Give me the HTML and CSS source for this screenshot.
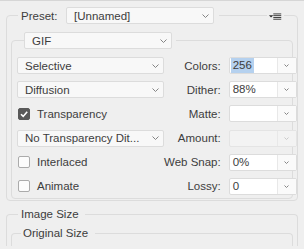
FILE: index.html
```html
<!DOCTYPE html>
<html lang="en">
<head>
    <meta charset="UTF-8">
    <meta name="viewport" content="width=device-width, initial-scale=1.0">
    <title>Save for Web - GIF</title>
    <link rel="stylesheet" href="styles.css">
</head>
<body>
    <fieldset class="group outer">
        <legend class="preset">
            <div class="legend-row">
                <span class="preset-label">Preset:</span>
                <div class="select">
                    <span>[Unnamed]</span>
                    <svg class="chev" width="7" height="4" viewBox="0 0 7 4"><polyline points="0.5,0.5 3.5,3.5 6.5,0.5"/></svg>
                </div>
            </div>
        </legend>
        <svg class="menu-icon" width="17" height="8" viewBox="0 0 17 8">
            <polygon points="1,2 6,2 3.5,4.5"/>
            <rect x="6" y="0" width="9" height="1"/>
            <rect x="6" y="2" width="9" height="1"/>
            <rect x="6" y="4" width="9" height="1"/>
            <rect x="6" y="6" width="9" height="1"/>
        </svg>

        <fieldset class="group inner">
            <legend class="format">
                <div class="select">
                    <span>GIF</span>
                    <svg class="chev" width="7" height="4" viewBox="0 0 7 4"><polyline points="0.5,0.5 3.5,3.5 6.5,0.5"/></svg>
                </div>
            </legend>

            <div class="grid">
                <div class="select">
                    <span>Selective</span>
                    <svg class="chev" width="7" height="4" viewBox="0 0 7 4"><polyline points="0.5,0.5 3.5,3.5 6.5,0.5"/></svg>
                </div>
                <span class="lbl">Colors:</span>
                <div class="combo">
                    <span class="val"><span class="hl">256</span></span>
                    <span class="arrow"><svg class="chev small" width="5" height="3" viewBox="0 0 5 3"><polyline points="0.5,0.5 2.5,2.5 4.5,0.5"/></svg></span>
                </div>

                <div class="select">
                    <span>Diffusion</span>
                    <svg class="chev" width="7" height="4" viewBox="0 0 7 4"><polyline points="0.5,0.5 3.5,3.5 6.5,0.5"/></svg>
                </div>
                <span class="lbl">Dither:</span>
                <div class="combo">
                    <span class="val">88%</span>
                    <span class="arrow"><svg class="chev small" width="5" height="3" viewBox="0 0 5 3"><polyline points="0.5,0.5 2.5,2.5 4.5,0.5"/></svg></span>
                </div>

                <div class="check">
                    <span class="box on"><svg width="10" height="10" viewBox="0 0 10 10"><polyline points="2,5.2 4.2,7.4 8.2,2.8"/></svg></span>
                    <span>Transparency</span>
                </div>
                <span class="lbl">Matte:</span>
                <div class="combo">
                    <span class="val"></span>
                    <span class="arrow"><svg class="chev small" width="5" height="3" viewBox="0 0 5 3"><polyline points="0.5,0.5 2.5,2.5 4.5,0.5"/></svg></span>
                </div>

                <div class="select">
                    <span>No Transparency Dit...</span>
                    <svg class="chev" width="7" height="4" viewBox="0 0 7 4"><polyline points="0.5,0.5 3.5,3.5 6.5,0.5"/></svg>
                </div>
                <span class="lbl">Amount:</span>
                <div class="combo disabled">
                    <span class="val"></span>
                    <span class="arrow"><svg class="chev small" width="5" height="3" viewBox="0 0 5 3"><polyline points="0.5,0.5 2.5,2.5 4.5,0.5"/></svg></span>
                </div>

                <div class="check">
                    <span class="box"></span>
                    <span>Interlaced</span>
                </div>
                <span class="lbl">Web Snap:</span>
                <div class="combo">
                    <span class="val">0%</span>
                    <span class="arrow"><svg class="chev small" width="5" height="3" viewBox="0 0 5 3"><polyline points="0.5,0.5 2.5,2.5 4.5,0.5"/></svg></span>
                </div>

                <div class="check">
                    <span class="box"></span>
                    <span>Animate</span>
                </div>
                <span class="lbl">Lossy:</span>
                <div class="combo">
                    <span class="val">0</span>
                    <span class="arrow"><svg class="chev small" width="5" height="3" viewBox="0 0 5 3"><polyline points="0.5,0.5 2.5,2.5 4.5,0.5"/></svg></span>
                </div>
            </div>
        </fieldset>
    </fieldset>

    <!-- panel continues below the visible area -->
    <fieldset class="group outer size">
        <legend class="title">Image Size</legend>
        <fieldset class="group inner">
            <legend class="title sub">Original Size</legend>
            <div class="spacer"></div>
        </fieldset>
    </fieldset>
</body>
</html>
```

FILE: styles.css
```css
* {
    box-sizing: border-box;
}
body {
    margin: 0;
    background-color: #efefef;
    border-top: 1px solid #d6d6d6;
    font-family: "Liberation Sans", Arial, sans-serif;
    font-size: 11.5px;
    color: #3d3d3d;
}
.group {
    margin: 0;
    min-width: 0;
    border: 1px solid #dcdcdc;
    border-radius: 4px;
}
.outer {
    position: relative;
    margin: 6px 6px 0;
    padding: 8px 4px 1px;
}
.inner {
    padding: 8px 5px 3px;
}
.preset {
    margin-left: 7px;
    padding: 0 5px 0 3px;
}
.legend-row {
    display: flex;
    align-items: center;
}
.preset-label {
    width: 45px;
}
.format {
    margin-left: 7px;
    padding: 0 4px 0 0;
}
.select {
    display: flex;
    align-items: center;
    justify-content: space-between;
    width: 148px;
    height: 17px;
    padding: 0 4px 0 7px;
    background-color: #f8f8f8;
    border: 1px solid #dcdcdc;
    border-radius: 2px;
    white-space: nowrap;
}
.grid .select {
    width: 147px;
}
.chev {
    flex: none;
    fill: none;
    stroke: #858585;
    stroke-width: 1;
}
.menu-icon {
    position: absolute;
    right: 13px;
    top: -11px;
    padding: 0 1px;
    background-color: #efefef;
    fill: #2e2e2e;
}
.grid {
    display: grid;
    grid-template-columns: 147px 1fr 68px;
    grid-auto-rows: 17px;
    row-gap: 7.2px;
    align-items: center;
}
.lbl {
    text-align: right;
    padding-right: 8px;
    white-space: nowrap;
}
.combo {
    display: flex;
    height: 17px;
    background-color: #fff;
    border: 1px solid #dcdcdc;
    border-radius: 2px;
}
.combo .val {
    flex: 1;
    padding-left: 3px;
    line-height: 15px;
    border-right: 1px solid #e8e8e8;
}
.combo .hl {
    margin-left: -2px;
    padding: 0 2px;
    display: inline-block;
    background-color: #b5d1ef;
}
.combo .arrow {
    width: 18px;
    display: flex;
    align-items: center;
    justify-content: center;
    background-color: #fafafa;
}
.combo.disabled {
    background-color: #f3f3f3;
    border-color: #e4e4e4;
}
.combo.disabled .arrow {
    background-color: #f3f3f3;
}
.combo.disabled .chev {
    stroke: #c9c9c9;
}
.check {
    display: flex;
    align-items: center;
    gap: 7px;
    padding-left: 1px;
}
.box {
    width: 12px;
    height: 12px;
    display: flex;
    align-items: center;
    justify-content: center;
    background-color: #fcfcfc;
    border: 1px solid #ababab;
    border-radius: 2px;
}
.box.on {
    background-color: #595959;
    border-color: #595959;
}
.box svg {
    fill: none;
    stroke: #fff;
    stroke-width: 1.6;
}
.size {
    margin-top: 7px;
    padding: 6px 4px 0;
    border-bottom: none;
    border-radius: 4px 4px 0 0;
}
.size .inner {
    padding: 0 5px;
    border-bottom: none;
    border-radius: 4px 4px 0 0;
}
.title {
    margin-left: 7px;
    padding: 0 6px 0 3px;
    line-height: 13px;
}
.title.sub {
    margin-left: 4px;
    padding: 0 7px 0 2px;
}
.spacer {
    height: 6px;
}
```
